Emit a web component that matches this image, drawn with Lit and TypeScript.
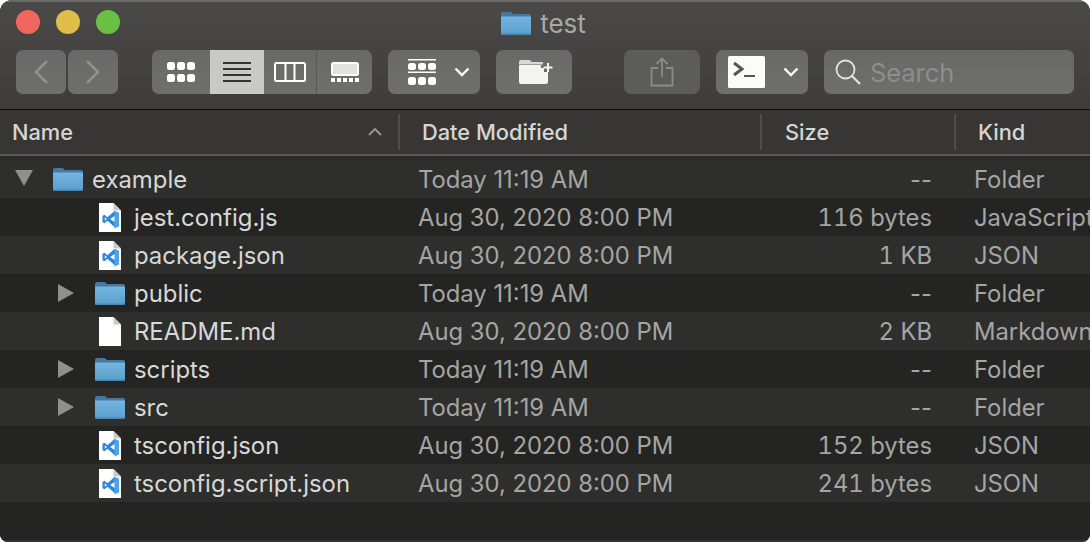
import { LitElement, html, css, svg } from "lit";
import { customElement } from "lit/decorators.js";

type Row = { name: string; icon: "folder" | "code" | "doc"; level: number; arrow?: "down" | "right"; date: string; size: string; kind: string };

const TODAY = "Today 11:19 AM";
const AUG = "Aug 30, 2020 8:00 PM";
const ROWS: Row[] = [
  { name: "example", icon: "folder", level: 0, arrow: "down", date: TODAY, size: "--", kind: "Folder" },
  { name: "jest.config.js", icon: "code", level: 1, date: AUG, size: "116 bytes", kind: "JavaScript" },
  { name: "package.json", icon: "code", level: 1, date: AUG, size: "1 KB", kind: "JSON" },
  { name: "public", icon: "folder", level: 1, arrow: "right", date: TODAY, size: "--", kind: "Folder" },
  { name: "README.md", icon: "doc", level: 1, date: AUG, size: "2 KB", kind: "Markdown" },
  { name: "scripts", icon: "folder", level: 1, arrow: "right", date: TODAY, size: "--", kind: "Folder" },
  { name: "src", icon: "folder", level: 1, arrow: "right", date: TODAY, size: "--", kind: "Folder" },
  { name: "tsconfig.json", icon: "code", level: 1, date: AUG, size: "152 bytes", kind: "JSON" },
  { name: "tsconfig.script.json", icon: "code", level: 1, date: AUG, size: "241 bytes", kind: "JSON" },
];

const folder = (uid: string) => html`<svg class="folder" width="30" height="24" viewBox="0 0 30 24">
  <defs><linearGradient id=${uid} x1="0" y1="0" x2="0" y2="1"><stop offset="0" stop-color="#74b6e2"/><stop offset="1" stop-color="#5c9dca"/></linearGradient></defs>
  <path d="M0 3a2 2 0 0 1 2-2h7c1.5 0 2 1 3 2h16a2 2 0 0 1 2 2v4H0z" fill="#47799e"/>
  <path d="M0 6.500a1 1 0 0 1 1-1h28a1 1 0 0 1 1 1V22a2 2 0 0 1-2 2H2a2 2 0 0 1-2-2z" fill="url(#${uid})"/>
  <rect x="0" y="22.500" width="30" height="1.500" rx=".7" fill="#4b86b0"/>
</svg>`;

const page = (logo: boolean) => html`<svg class="file" width="22" height="29" viewBox="0 0 22 29">
  <path d="M0 0h14.500L22 7.500V29H0z" fill="#fff"/>
  <path d="M14.500 0v7.500H22z" fill="#c9c9c9"/>
  ${logo ? svg`
    <path d="M15.500 8 8.500 14.200 5.500 11.800 3.500 12.800v6.400l2 1 3-2.400 7 6.200 4.500-2V10z" fill="#2f86d6"/>
    <path d="M15.500 8 20 10v13.500l-4.500 2z" fill="#4aa3ec"/>
    <path d="M15.500 13 11.200 16l4.300 3z" fill="#fff"/>
    <path d="M5.800 14.300 7.900 16l-2.100 1.700z" fill="#fff"/>` : ""}
</svg>`;

const icons = {
  back: html`<svg width="16" height="26" viewBox="0 0 16 26"><path d="M14 2 3 13l11 11" fill="none" stroke="#8f8f8e" stroke-width="2.600"/></svg>`,
  forward: html`<svg width="16" height="26" viewBox="0 0 16 26"><path d="m2 2 11 11L2 24" fill="none" stroke="#8f8f8e" stroke-width="2.600"/></svg>`,
  grid: html`<svg width="28" height="20" viewBox="0 0 28 20" fill="#fff">
    ${[0, 10, 20].map((x) => svg`<rect x=${x} y="0" width="8" height="8" rx="2.500"/><rect x=${x} y="12" width="8" height="8" rx="2.500"/>`)}</svg>`,
  list: html`<svg width="28" height="20" viewBox="0 0 28 20" fill="#333">
    ${[0, 6, 12, 18].map((y) => svg`<rect x="0" y=${y} width="28" height="2"/>`)}</svg>`,
  columns: html`<svg width="32" height="20" viewBox="0 0 32 20"><rect x="1" y="1" width="30" height="18" rx="1.500" fill="none" stroke="#fff" stroke-width="2"/><path d="M11.500 1v18M20.500 1v18" stroke="#fff" stroke-width="2"/></svg>`,
  gallery: html`<svg width="28" height="20" viewBox="0 0 28 20"><rect x="1" y="1" width="26" height="12" rx="1.500" fill="#e2e2e1" stroke="#fff" stroke-width="2"/>
    ${[0, 6, 12, 18, 24].map((x) => svg`<rect x=${x} y="16" width="4" height="4" fill="#fff"/>`)}</svg>`,
  arrange: html`<svg width="28" height="26" viewBox="0 0 28 26" fill="#fff">
    <rect x="0" y="0" width="28" height="1.500"/><rect x="0" y="12.500" width="28" height="1.500"/>
    ${[0, 10, 20].map((x) => svg`<rect x=${x} y="4" width="8" height="7" rx="2.500"/><rect x=${x} y="18" width="8" height="8" rx="2.500"/>`)}</svg>`,
  chevron: html`<svg class="chev" width="16" height="10" viewBox="0 0 16 10"><path d="m1.500 1.500 6.500 6.500 6.500-6.500" fill="none" stroke="#fff" stroke-width="2.400"/></svg>`,
  newFolder: html`<svg width="34" height="24" viewBox="0 0 34 24"><path d="M0 2a2 2 0 0 1 2-2h8c1.500 0 2 1.500 3 2h11v2.500H0z" fill="#d8d8d7"/><path d="M0 6a1 1 0 0 1 1-1h21v3h3v4l4 0v10a2 2 0 0 1-2 2H2a2 2 0 0 1-2-2z" fill="#f4f4f3"/><path d="M29 3v9M24.500 7.500h9" stroke="#f4f4f3" stroke-width="2"/></svg>`,
  share: html`<svg width="24" height="30" viewBox="0 0 24 30" fill="none" stroke="#8b8b8a" stroke-width="1.800"><path d="M8 11H1.500v17.500h21V11H16"/><path d="M12 20V2M6.500 7 12 1.500 17.500 7"/></svg>`,
  terminal: html`<svg width="37" height="32" viewBox="0 0 37 32"><rect width="37" height="32" rx="1.500" fill="#fbfbfa"/><path d="m6 7 8 6-8 6" fill="none" stroke="#555" stroke-width="3"/><rect x="16" y="19" width="11" height="2" fill="#555"/></svg>`,
  search: html`<svg width="26" height="26" viewBox="0 0 26 26" fill="none" stroke="#e4e4e3" stroke-width="1.800"><circle cx="10.500" cy="10.500" r="9"/><path d="m17 17 8 8" stroke-width="2.200"/></svg>`,
  sort: html`<svg width="14" height="8" viewBox="0 0 14 8"><path d="m1 7 6-6 6 6" fill="none" stroke="#9a9a99" stroke-width="1.800"/></svg>`,
};

@customElement("app-root")
export class AppRoot extends LitElement {
  static styles = css`
    :host { display: block; width: 1090px; height: 542px; background: #fff; overflow: hidden; font-family: Inter, "Liberation Sans", sans-serif; }
    .window { height: 542px; border-radius: 12px 12px 8px 8px; overflow: hidden; background: #242423; display: flex; flex-direction: column; }
    .chrome { height: 109px; box-sizing: border-box; border-top: 2px solid #6a6a69; background: linear-gradient(#4a4948, #3e3d3c); position: relative; flex: none; }
    .titlebar { height: 48px; display: flex; align-items: center; justify-content: center; position: relative; }
    .lights { position: absolute; left: 16px; top: 8px; display: flex; gap: 16px; }
    .light { width: 24px; height: 24px; border-radius: 50%; }
    .red { background: #f1675d; } .yellow { background: #e0bd4a; } .green { background: #6ac146; }
    .title { display: flex; align-items: center; gap: 9px; color: #a8a8a6; font-size: 26px; margin-top: -6px; margin-left: -3px; }
    .toolbar { display: flex; padding-left: 16px; height: 44px; }
    .btn { height: 44px; box-sizing: border-box; border-radius: 7px; background: linear-gradient(#696968, #6f6f6e); display: flex; align-items: center; justify-content: center; flex: none; }
    .nav { width: 50px; } .nav + .nav { margin-left: 2px; }
    .views { margin-left: 34px; width: 220px; display: flex; overflow: hidden; justify-content: flex-start; }
    .view { height: 44px; display: flex; align-items: center; justify-content: center; box-sizing: border-box; }
    .v1 { width: 58px; } .v2 { width: 54px; background: #c9c9c8; } .v3 { width: 52px; } .v4 { width: 56px; border-left: 1px solid #585857; }
    .arrange { margin-left: 16px; width: 92px; gap: 18px; justify-content: flex-start; padding-left: 20px; }
    .new { margin-left: 16px; width: 76px; padding-left: 4px; }
    .share { margin-left: 52px; width: 76px; background: #5c5c5b; }
    .term { margin-left: 16px; width: 92px; justify-content: flex-start; padding-left: 12px; gap: 18px; }
    .search { margin-left: 16px; width: 250px; justify-content: flex-start; padding-left: 11px; gap: 9px; color: #8e8e8d; font-size: 25.400px; background: linear-gradient(#686867, #6f6f6e); }
    .header { height: 47px; flex: none; box-sizing: border-box; border-top: 1px solid #0f0f0f; border-bottom: 2px solid #5a5a59; background: #373634; display: grid; grid-template-columns: 398px 362px 194px 136px; color: #d6d6d5; font-size: 21.800px; font-weight: 500; align-items: center; }
    .hcell { height: 36px; display: flex; align-items: center; box-sizing: border-box; padding-left: 22px; border-left: 2px solid #4e4d4c; position: relative; }
    .hcell.first { border-left: 0; padding-left: 12px; padding-right: 16px; justify-content: space-between; }
    .hcell.sz { padding-left: 23px; }
    .gap { height: 4px; flex: none; background: #2b2b2a; }
    .row { height: 38px; display: grid; grid-template-columns: 418px 290px 224px 158px; align-items: center; font-size: 23.800px; color: #a5a5a4; white-space: nowrap; overflow: hidden; }
    .row:nth-child(odd) { background: #2e2e2d; }
    .row:nth-child(even) { background: #242423; }
    .name { display: flex; align-items: center; color: #d8d8d7; height: 38px; position: relative; font-size: 23.900px; }
    .lvl0 { padding-left: 53px; } .lvl1 { padding-left: 95px; }
    .arrow { position: absolute; top: 50%; margin-top: -9px; }
    .lvl0 .arrow { left: 15px; } .lvl1 .arrow { left: 58px; }
    .iconbox { width: 30px; display: flex; justify-content: center; margin-right: 9px; flex: none; }
    .size { text-align: right; font-variant-numeric: tabular-nums; }
    .size.dash { font-variant-numeric: normal; }
    .kind { padding-left: 42px; }
    .filler { flex: 1; background: #242423; }
    .foot { height: 2px; background: #333332; flex: none; }
  `;

  private renderIcon(r: Row, i: number) {
    if (r.icon === "folder") return folder(`f${i}`);
    return page(r.icon === "code");
  }

  private renderArrow(r: Row) {
    if (r.arrow === "down") return html`<svg class="arrow" width="18" height="16" viewBox="0 0 18 16"><path d="M0 0h18L9 16z" fill="#8f8f8e"/></svg>`;
    if (r.arrow === "right") return html`<svg class="arrow" width="16" height="18" viewBox="0 0 16 18"><path d="M0 0v18l16-9z" fill="#8f8f8e"/></svg>`;
    return "";
  }

  render() {
    return html`<div class="window">
      <div class="chrome">
        <div class="titlebar">
          <div class="lights"><span class="light red"></span><span class="light yellow"></span><span class="light green"></span></div>
          <div class="title">${folder("ft")}<span>test</span></div>
        </div>
        <div class="toolbar">
          <div class="btn nav">${icons.back}</div>
          <div class="btn nav">${icons.forward}</div>
          <div class="btn views">
            <div class="view v1">${icons.grid}</div>
            <div class="view v2">${icons.list}</div>
            <div class="view v3">${icons.columns}</div>
            <div class="view v4">${icons.gallery}</div>
          </div>
          <div class="btn arrange">${icons.arrange}${icons.chevron}</div>
          <div class="btn new">${icons.newFolder}</div>
          <div class="btn share">${icons.share}</div>
          <div class="btn term">${icons.terminal}${icons.chevron}</div>
          <div class="btn search">${icons.search}<span>Search</span></div>
        </div>
      </div>
      <div class="header">
        <div class="hcell first"><span>Name</span>${icons.sort}</div>
        <div class="hcell">Date Modified</div>
        <div class="hcell sz">Size</div>
        <div class="hcell">Kind</div>
      </div>
      <div class="gap"></div>
      <div class="rows">
        ${ROWS.map((r, i) => html`<div class="row">
          <div class="name lvl${r.level}">${this.renderArrow(r)}<span class="iconbox">${this.renderIcon(r, i)}</span><span>${r.name}</span></div>
          <div>${r.date}</div>
          <div class="size ${r.size === "--" ? "dash" : ""}">${r.size}</div>
          <div class="kind">${r.kind}</div>
        </div>`)}
      </div>
      <div class="filler"></div>
      <div class="foot"></div>
    </div>`;
  }
}
